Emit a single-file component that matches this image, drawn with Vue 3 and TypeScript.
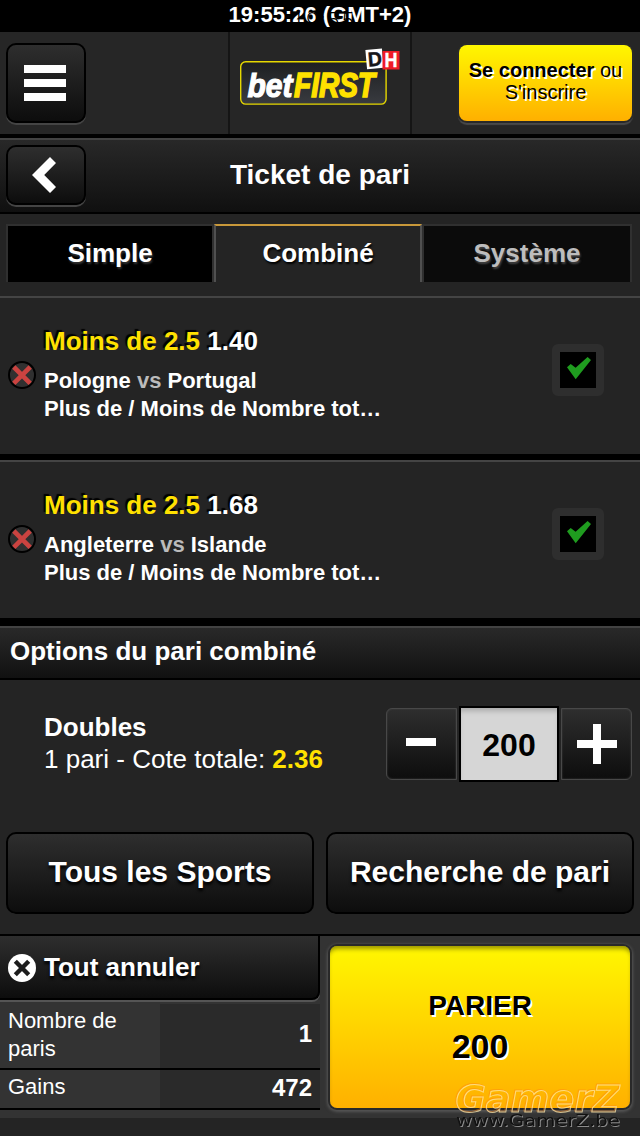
<script setup lang="ts">
import { ref } from 'vue'

interface Bet {
  pick: string
  odds: string
  home: string
  away: string
}

const bets: Bet[] = [
  { pick: 'Moins de 2.5', odds: '1.40', home: 'Pologne', away: 'Portugal' },
  { pick: 'Moins de 2.5', odds: '1.68', home: 'Angleterre', away: 'Islande' },
]

const tabs = [
  { id: 'simple', label: 'Simple' },
  { id: 'combine', label: 'Combiné' },
  { id: 'systeme', label: 'Système' },
]
const activeTab = ref('combine')
const stake = ref(200)
</script>

<template>
  <div class="screen">
    <div class="status">
      19:55:26 (GMT+2)
      <span class="clock">19:55</span>
    </div>

    <header class="header">
      <button class="dark-btn menu" aria-label="Menu">
        <svg width="42" height="36" viewBox="0 0 42 36">
          <path d="M0 0h42v8H0zM0 14h42v8H0zM0 28h42v8H0z" fill="#fff" />
        </svg>
      </button>
      <div class="brand">
        <svg width="180" height="102" viewBox="230 32 180 102">
          <defs>
            <linearGradient id="plate" x1="0" y1="0" x2="0" y2="1">
              <stop offset="0" stop-color="#1d1f21" />
              <stop offset="1" stop-color="#393b40" />
            </linearGradient>
          </defs>
          <rect x="240.7" y="61.7" width="145.4" height="42.4" rx="5" fill="url(#plate)" stroke="#e6d800" stroke-width="1.4" />
          <text class="logo-text" x="247.5" y="96.5" textLength="45" lengthAdjust="spacingAndGlyphs" font-size="34" fill="#fff" stroke="#fff" stroke-width="1.2">bet</text>
          <text class="logo-text" x="294" y="96.5" textLength="81" lengthAdjust="spacingAndGlyphs" font-size="34.5" fill="#ffe100" stroke="#ffe100" stroke-width="1.6">FIRST</text>
          <g transform="rotate(-5 374 59)">
            <rect x="366.2" y="49.2" width="16.6" height="19.3" fill="#fff" />
            <text class="tile" x="367.8" y="66" textLength="14" lengthAdjust="spacingAndGlyphs" font-size="20" fill="#16161a" stroke="#16161a" stroke-width=".5">D</text>
          </g>
          <rect x="382.5" y="51" width="17" height="18.5" fill="#ee1c25" />
          <text class="tile" x="384.6" y="67" textLength="13" lengthAdjust="spacingAndGlyphs" font-size="19.5" fill="#fff" stroke="#fff" stroke-width=".4">H</text>
        </svg>
      </div>
      <button class="login"><span><b>Se connecter</b> ou</span><span>S'inscrire</span></button>
    </header>

    <div class="title-bar">
      <button class="dark-btn back" aria-label="Retour">
        <svg width="24" height="36" viewBox="0 0 24 36">
          <path d="M18 0L24 6L12.2 18L24 30L18 36L0 18Z" fill="#fff" />
        </svg>
      </button>
      <h1>Ticket de pari</h1>
    </div>

    <nav class="tabs">
      <button v-for="t in tabs" :key="t.id" class="tab" :class="[t.id, { active: t.id === activeTab }]" @click="activeTab = t.id">
        {{ t.label }}
      </button>
    </nav>

    <section v-for="b in bets" :key="b.home" class="bet">
      <svg class="remove" width="28" height="28" viewBox="0 0 28 28">
        <circle cx="14" cy="14" r="13" fill="#303030" stroke="#000" stroke-width="2" />
        <path d="M5.8 6L22.2 22.4M22.2 6L5.8 22.4" stroke="#cb4340" stroke-width="4.6" />
      </svg>
      <div class="bet-info">
        <div class="pick"><em>{{ b.pick }}</em> {{ b.odds }}</div>
        <div class="line">{{ b.home }} <i>vs</i> {{ b.away }}</div>
        <div class="line">Plus de / Moins de Nombre tot…</div>
      </div>
      <div class="check">
        <svg width="36" height="36" viewBox="0 0 36 36">
          <path d="M7 15.3L10.7 12L15.6 15.8L27.6 5L31 8L15.7 27.3Z" fill="#1f9c1f" />
        </svg>
      </div>
    </section>

    <h2 class="section-title">Options du pari combiné</h2>

    <section class="combo">
      <div class="combo-info">
        <b>Doubles</b>
        <span>1 pari - Cote totale: <strong>2.36</strong></span>
      </div>
      <div class="stepper">
        <button class="step minus" aria-label="Moins" @click="stake--">
          <svg width="30" height="8"><rect width="30" height="8" fill="#fff" /></svg>
        </button>
        <div class="amount">{{ stake }}</div>
        <button class="step plus" aria-label="Plus" @click="stake++">
          <svg width="40" height="40"><path d="M16 0h8v16h16v8H24v16h-8V24H0v-8h16z" fill="#fff" /></svg>
        </button>
      </div>
    </section>

    <div class="actions">
      <button class="dark-btn wide">Tous les Sports</button>
      <button class="dark-btn wide">Recherche de pari</button>
    </div>

    <footer class="footer">
      <div class="summary">
        <button class="clear">
          <svg width="28" height="28" viewBox="0 0 28 28">
            <circle cx="14" cy="14" r="14" fill="#fff" />
            <path d="M7.3 7.3L20.7 20.7M20.7 7.3L7.3 20.7" stroke="#1d1d1d" stroke-width="4.4" />
          </svg>
          <span>Tout annuler</span>
        </button>
        <div class="row count"><span>Nombre de paris</span><b>1</b></div>
        <div class="row gains"><span>Gains</span><b>472</b></div>
      </div>
      <button class="place"><span>PARIER</span><b>{{ stake }}</b></button>
    </footer>

    <svg class="watermark" width="180" height="58" viewBox="450 1076 180 58">
      <text class="wm-name" x="455.5" y="1111.5" textLength="164" lengthAdjust="spacingAndGlyphs">GamerZ</text>
      <text class="wm-url" x="456" y="1126" textLength="164" lengthAdjust="spacingAndGlyphs">www.GamerZ.be</text>
    </svg>
  </div>
</template>

<style>
html,
body {
  margin: 0;
  background: #242424;
}
</style>

<style scoped>
.screen {
  position: relative;
  width: 640px;
  height: 1136px;
  overflow: hidden;
  background: #242424;
  color: #fff;
  font-family: "Liberation Sans", Arial, Helvetica, sans-serif;
}
.screen * {
  box-sizing: border-box;
}
button {
  margin: 0;
  padding: 0;
  border: 0;
  color: inherit;
  font-family: inherit;
}
svg {
  display: block;
  flex: none;
}
.status {
  position: relative;
  height: 32px;
  background: #000;
  text-align: center;
  font-weight: bold;
  font-size: 22px;
  line-height: 29px;
}
.clock {
  position: absolute;
  left: 292px;
  top: 13px;
  color: #000;
  font-family: Roboto, "Liberation Sans", sans-serif;
  font-weight: 300;
  font-size: 22px;
  letter-spacing: 2px;
  line-height: 16px;
}
.header {
  display: flex;
  height: 106px;
  background: #262626;
  border-bottom: 4px solid #000;
}
.dark-btn {
  display: flex;
  align-items: center;
  justify-content: center;
  border: 2px solid #000;
  border-radius: 10px;
  background: linear-gradient(#2e2e2e, #0d0d0d);
  box-shadow: 0 2px 0 #444;
}
.menu {
  width: 80px;
  height: 80px;
  margin: 11px 142px 0 6px;
  padding-right: 2px;
}
.brand {
  width: 184px;
  border: solid #151515;
  border-width: 0 2px;
}
.logo-text {
  font-family: "Liberation Sans Narrow", "Liberation Sans", sans-serif;
  font-weight: bold;
  font-style: italic;
}
.tile {
  font-weight: bold;
}
.login {
  display: flex;
  flex-direction: column;
  width: 173px;
  height: 76px;
  margin: 13px 0 0 47px;
  padding-top: 14px;
  border-radius: 8px;
  background: linear-gradient(#fff700, #ffb000);
  box-shadow: 0 0 0 2px #292929, 0 3px 1px 1px #494949;
  color: #000;
  font-size: 20px;
  line-height: 22px;
  text-shadow: 2px 2px 0 #fff;
}
.login span {
  display: block;
  text-align: center;
}
.title-bar {
  display: flex;
  height: 76px;
  border-top: 2px solid #424242;
  border-bottom: 2px solid #000;
  background: linear-gradient(#282828, #101010);
}
.back {
  width: 80px;
  height: 60px;
  margin: 5px 0 0 6px;
  padding-right: 4px;
}
h1 {
  flex: 1;
  margin: 0 86px 0 0;
  text-align: center;
  font-size: 28px;
  line-height: 69px;
}
.tabs {
  display: grid;
  grid-template-columns: 208px 208px 210px;
  height: 84px;
  padding: 10px 8px 14px 6px;
  border-bottom: 2px solid #444;
}
.tab {
  height: 58px;
  border: 2px solid #303030;
  border-bottom: 0;
  font-size: 26px;
  font-weight: bold;
  line-height: 54px;
  padding-bottom: 2px;
  text-shadow: 1px 2px 2px #000;
}
.simple {
  background: #000;
  text-shadow: 1px 2px 2px #333;
}
.systeme {
  background: #0b0b0b;
  color: #bdbdbd;
  text-shadow: 1px 2px 2px #444;
}
.tab.active {
  background: #242424;
  border-color: #c8983a #505050;
}
.bet {
  display: flex;
  height: 162px;
  padding: 0 36px 0 8px;
  border-bottom: 6px solid #000;
}
.bet + .bet {
  height: 166px;
  border-top: 2px solid #444;
  border-bottom-width: 8px;
}
.remove {
  margin-top: 63px;
}
.bet-info {
  width: 516px;
  padding: 28px 0 0 8px;
  font-weight: bold;
}
.pick {
  margin-bottom: 11px;
  font-size: 26px;
  line-height: 30px;
  text-shadow: -2px -2px 1px #000;
}
.pick em {
  color: #ffe100;
  font-style: normal;
}
.line {
  font-size: 22px;
  line-height: 28px;
}
.line i {
  color: #bbb;
  font-style: normal;
}
.check {
  width: 52px;
  height: 52px;
  margin-top: 46px;
  border: 8px solid #2e2e2e;
  border-radius: 6px;
  background: #000;
}
.section-title {
  height: 54px;
  margin: 0;
  padding-left: 10px;
  border-top: 2px solid #424242;
  border-bottom: 2px solid #000;
  background: linear-gradient(#292929, #111);
  font-size: 26px;
  line-height: 46px;
}
.combo {
  display: flex;
  justify-content: space-between;
  height: 152px;
  padding: 26px 8px 0 44px;
}
.combo-info {
  display: flex;
  flex-direction: column;
  padding-top: 5px;
  font-size: 26px;
  line-height: 32px;
}
.combo-info strong {
  color: #ffe100;
}
.stepper {
  display: flex;
  align-items: center;
  gap: 2px;
  height: 76px;
}
.step {
  display: flex;
  align-items: center;
  justify-content: center;
  width: 71px;
  height: 72px;
  border: 1px solid #484848;
  background: linear-gradient(#2e2e2e, #0d0d0d);
  box-shadow: inset 0 0 2px #444;
}
.minus {
  border-radius: 6px 0 0 6px;
  padding: 0 2px 4px 0;
}
.plus {
  border-radius: 0 6px 6px 0;
}
.amount {
  width: 100px;
  height: 76px;
  border: 2px solid #000;
  background: #d6d6d6;
  box-shadow: inset 0 5px 5px -2px #aaa;
  color: #000;
  text-align: center;
  font-size: 32px;
  font-weight: bold;
  line-height: 74px;
}
.actions {
  display: flex;
  gap: 12px;
  height: 102px;
  padding: 0 6px;
}
.wide {
  flex: 1;
  height: 82px;
  padding-bottom: 3px;
  box-shadow: 0 1px 0 -1px #555;
  font-size: 30px;
  font-weight: bold;
  text-shadow: 0 3px 3px #000;
  white-space: nowrap;
}
.footer {
  display: flex;
  height: 184px;
  border-top: 2px solid #000;
  background: #333;
}
.summary {
  width: 320px;
}
.clear {
  display: flex;
  align-items: center;
  gap: 8px;
  width: 320px;
  height: 64px;
  margin-bottom: 4px;
  padding-left: 8px;
  border: solid #000;
  border-width: 0 2px 2px 0;
  border-radius: 0 0 8px 0;
  background: linear-gradient(#2e2e2e, #0d0d0d);
  box-shadow: 0 2px 0 #555;
  font-size: 26px;
  font-weight: bold;
  text-shadow: 0 3px 3px #000;
}
.clear svg {
  margin-top: 2px;
}
.row {
  display: grid;
  grid-template-columns: 160px 160px;
  border-bottom: 2px solid #000;
  font-size: 22px;
  line-height: 28px;
}
.row span {
  padding: 3px 40px 0 8px;
}
.row b {
  padding-right: 8px;
  background: #2a2a2a;
  text-align: right;
  font-size: 24px;
}
.count {
  height: 66px;
}
.count b {
  line-height: 59px;
}
.gains {
  height: 40px;
}
.gains b {
  line-height: 35px;
}
.place {
  display: flex;
  flex-direction: column;
  align-items: center;
  width: 300px;
  height: 162px;
  margin: 10px 0 0 10px;
  padding-top: 40px;
  border-radius: 7px;
  background: linear-gradient(#fff700, #ffb000);
  box-shadow: inset 0 5px 4px -2px rgba(60, 60, 0, 0.5), 0 0 0 2px #292929, 0 1px 3px 3px #555;
  color: #000;
  font-size: 28px;
  font-weight: bold;
  line-height: 40px;
  text-shadow: 2px 2px 0 #fff;
}
.place b {
  font-size: 34px;
}
.watermark {
  position: absolute;
  left: 450px;
  top: 1076px;
}
.wm-name {
  font: italic bold 37px "DejaVu Sans", sans-serif;
  fill: none;
  stroke: rgba(255, 232, 170, 0.75);
  stroke-width: 1px;
  filter: drop-shadow(-1px -1px 0 rgba(255, 130, 20, 0.6));
}
.wm-url {
  font: 15px "DejaVu Sans", sans-serif;
  fill: #111;
  filter: drop-shadow(1px 1px 0 #8c8c8c);
}
</style>
